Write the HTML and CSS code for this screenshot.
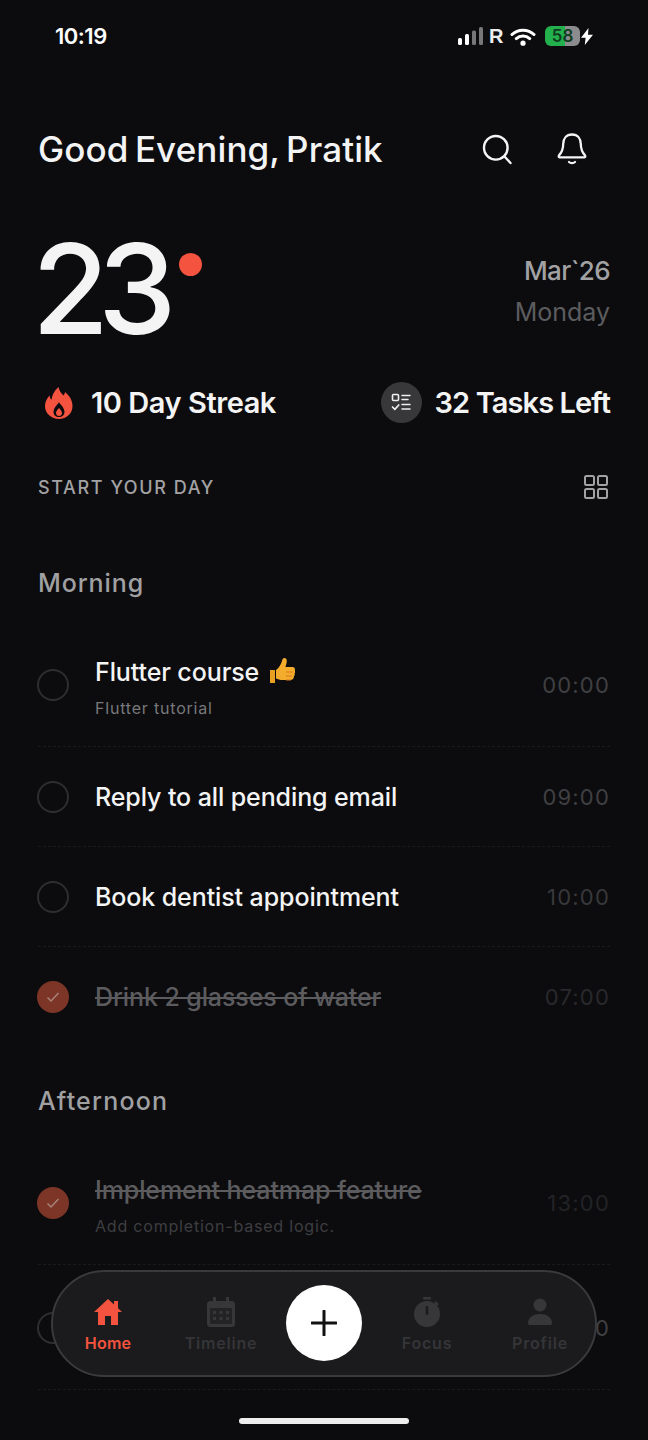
FILE: index.html
```html
<!DOCTYPE html>
<html lang="en">
<head>
<meta charset="utf-8">
<title>Home</title>
<link rel="stylesheet" href="styles.css">
</head>
<body>
<div class="screen">
  <div class="status">
    <span class="clock">10:19</span>
    <div class="status-icons">
      <svg class="signal" viewBox="0 0 27 18" width="27" height="18"><rect x="0" y="11" width="4" height="7" rx="1.500" fill="#fff"/><rect x="7" y="7" width="4" height="11" rx="1.500" fill="#fff"/><rect x="14" y="3.500" width="4" height="14.500" rx="1.500" fill="#77777a"/><rect x="21" y="0" width="4" height="18" rx="1.500" fill="#77777a"/></svg>
      <span class="roam">R</span>
      <svg class="wifi" viewBox="0 0 26 19" width="26" height="19"><path d="M2 7.500C8 1.700 18 1.700 24 7.500M6.300 11.600C10 8.200 16 8.200 19.700 11.600" fill="none" stroke="#fff" stroke-width="3" stroke-linecap="round"/><circle cx="13" cy="16.200" r="2.600" fill="#fff"/></svg>
      <span class="battery">58</span>
      <svg class="bolt" viewBox="0 0 12 17" width="12" height="17"><path d="M7.500 0 0 9.800h4.600L3.800 17 12 6.800H7z" fill="#fff"/></svg>
    </div>
  </div>

  <main class="content">
    <header class="top">
      <h1 class="greeting">Good Evening, Pratik</h1>
      <div class="top-actions">
        <svg viewBox="0 0 32 32" width="32" height="32"><circle cx="14.800" cy="14.800" r="11.800" fill="none" stroke="#f4f4f4" stroke-width="2.400"/><path d="m23.500 23.500 6 6.500" stroke="#f4f4f4" stroke-width="2.400" stroke-linecap="round"/></svg>
        <svg viewBox="0 0 32 34" width="32" height="34"><path d="M16 2.500c-5.500 0-8.800 4-8.800 9.500 0 6.500-2 9-4.200 11.400-.7.800-.2 1.900.9 1.900h24.200c1.100 0 1.600-1.100.9-1.900-2.200-2.400-4.200-4.900-4.200-11.400 0-5.500-3.300-9.500-8.800-9.500z" fill="none" stroke="#f4f4f4" stroke-width="2.300" stroke-linejoin="round"/><path d="M13 30c1.600 1.400 4.400 1.400 6 0" fill="none" stroke="#f4f4f4" stroke-width="2.300" stroke-linecap="round"/></svg>
      </div>
    </header>

    <section class="hero">
      <div class="day-wrap">
        <span class="day">23</span>
        <span class="day-dot"></span>
      </div>
      <div class="date">
        <span class="month">Mar`26</span>
        <span class="weekday">Monday</span>
      </div>
    </section>

    <section class="stats">
      <div class="stat">
        <svg class="flame" viewBox="0 0 30 32" width="30" height="32"><path fill-rule="evenodd" d="M14.500 0c1 4.500 3 6.500 5 8.500.8-1 1.300-2 1.500-3.500 4.500 3.500 7.500 8.500 7.500 14C28.500 26.500 22.500 32 15 32S1 26.500 1 19c0-4.500 2-7.500 4.500-10.500.3 2 .9 3.200 2 4.200C8 8 10.500 3.500 14.500 0zM15 15.500c-2.500 3-5.500 5.800-5.500 9.500 0 3 2.500 5 5.500 5s5.500-2 5.500-5c0-3.700-3-6.500-5.500-9.500z" fill="#f4533f"/><path d="M15 21c-1.500 1.800-3 3-3 5 0 1.700 1.400 3 3 3s3-1.300 3-3c0-2-1.500-3.200-3-5z" fill="#f4533f"/></svg>
        <span class="stat-text streak">10 Day Streak</span>
      </div>
      <div class="stat">
        <span class="stat-badge">
          <svg viewBox="0 0 20 20" width="20" height="20"><rect x="1.500" y="1.500" width="6" height="6" rx="1" fill="none" stroke="#eee" stroke-width="1.600"/><path d="M11 2.500h8M11 6.500h6M11 11.500h8M11 16h8" stroke="#eee" stroke-width="1.500" stroke-linecap="round"/><path d="m1.500 14 2.300 2.300 4-4.300" fill="none" stroke="#eee" stroke-width="1.700" stroke-linecap="round" stroke-linejoin="round"/></svg>
        </span>
        <span class="stat-text">32 Tasks Left</span>
      </div>
    </section>

    <div class="start">
      <span class="start-label">START YOUR DAY</span>
      <svg viewBox="0 0 24 24" width="24" height="24"><g fill="none" stroke="#a2a2a4" stroke-width="2"><rect x="1" y="1" width="9" height="9" rx="1.500"/><rect x="14" y="1" width="9" height="9" rx="1.500"/><rect x="1" y="14" width="9" height="9" rx="1.500"/><rect x="14" y="14" width="9" height="9" rx="1.500"/></g></svg>
    </div>

    <h2 class="section-title section-first">Morning</h2>
    <ul class="tasks">
      <li class="task task-two">
        <span class="check"></span>
        <div class="task-body">
          <div class="task-title">Flutter course
            <svg class="thumb" viewBox="0 0 26 28" width="26" height="28"><path d="M1 13h5v13H1z" fill="#e8a020"/><path d="M7 13c3-2 5-6 6-9 .4-2 1-3 2.500-3 2 0 2.500 2 2.200 4-.2 2-1 3.500-1.200 5h7c2 0 2.800 1.500 2.300 3 .7 1 .6 2.500-.3 3.300.5 1 .3 2.400-.7 3.100.3 1.300-.3 2.900-2 3.300-1 .3-6 .3-9 .3-3 0-5-.7-6.800-1.500z" fill="#f4ac2c"/><path d="M17 15h7M17 19h6M17 23h5" stroke="#d9781f" stroke-width="1"/></svg>
          </div>
          <div class="task-sub">Flutter tutorial</div>
        </div>
        <span class="task-time">00:00</span>
      </li>
      <li class="task">
        <span class="check"></span>
        <div class="task-body"><div class="task-title">Reply to all pending email</div></div>
        <span class="task-time">09:00</span>
      </li>
      <li class="task">
        <span class="check"></span>
        <div class="task-body"><div class="task-title">Book dentist appointment</div></div>
        <span class="task-time time-dim">10:00</span>
      </li>
      <li class="task task-last">
        <span class="check check-done"><svg viewBox="0 0 18 18" width="18" height="18"><path d="m3.500 9.500 3.500 3.500 7.500-8" fill="none" stroke="#a8837a" stroke-width="1.500"/></svg></span>
        <div class="task-body"><div class="task-title title-done">Drink 2 glasses of water</div></div>
        <span class="task-time time-done">07:00</span>
      </li>
    </ul>

    <h2 class="section-title section-wide">Afternoon</h2>
    <ul class="tasks">
      <li class="task task-two">
        <span class="check check-done"><svg viewBox="0 0 18 18" width="18" height="18"><path d="m3.500 9.500 3.500 3.500 7.500-8" fill="none" stroke="#a8837a" stroke-width="1.500"/></svg></span>
        <div class="task-body">
          <div class="task-title title-done">Implement heatmap feature</div>
          <div class="task-sub sub-done">Add completion-based logic.</div>
        </div>
        <span class="task-time time-faint">13:00</span>
      </li>
      <li class="task task-two task-hidden">
        <span class="check"></span>
        <div class="task-body"></div>
        <span class="task-time">0</span>
      </li>
    </ul>
  </main>

  <nav class="nav">
    <a class="nav-item nav-active">
      <svg viewBox="0 0 30 28" width="30" height="28"><path d="M15 1 1 14h4v13h7v-9h6v9h7V14h4l-4-3.700V3h-4v3.600z" fill="#f4533f"/></svg>
      <span>Home</span>
    </a>
    <a class="nav-item">
      <svg viewBox="0 0 28 30" width="28" height="30"><path d="M6 0h3v4h10V0h3v4h2.500A3.500 3.500 0 0 1 28 7.500V26.500a3.500 3.500 0 0 1-3.500 3.500h-21A3.500 3.500 0 0 1 0 26.500V7.500A3.500 3.500 0 0 1 3.500 4H6z" fill="#37373a"/><rect x="3" y="11" width="22" height="16" rx="1" fill="#232325"/><g fill="#37373a"><rect x="6" y="14" width="3" height="3"/><rect x="12.500" y="14" width="3" height="3"/><rect x="19" y="14" width="3" height="3"/><rect x="6" y="20" width="3" height="3"/><rect x="12.500" y="20" width="3" height="3"/><rect x="19" y="20" width="3" height="3"/></g></svg>
      <span>Timeline</span>
    </a>
    <button class="nav-add" aria-label="Add">
      <svg viewBox="0 0 26 26" width="26" height="26"><path d="M13 1v24M1 13h24" stroke="#111" stroke-width="3" stroke-linecap="round"/></svg>
    </button>
    <a class="nav-item">
      <svg viewBox="0 0 28 30" width="28" height="30"><rect x="10" y="0" width="8" height="2.500" rx="1" fill="#37373a"/><circle cx="14" cy="17" r="13" fill="#37373a"/><path d="M22 5l3 3" stroke="#37373a" stroke-width="2.500"/><rect x="12.700" y="9" width="2.600" height="9" rx="1.300" fill="#1c1c1e"/></svg>
      <span>Focus</span>
    </a>
    <a class="nav-item">
      <svg viewBox="0 0 26 28" width="26" height="28"><circle cx="13" cy="7" r="6.500" fill="#37373a"/><path d="M1 25c0-6 6-9 12-9s12 3 12 9c0 1.500-1 2-2 2H3c-1 0-2-.5-2-2z" fill="#37373a"/></svg>
      <span>Profile</span>
    </a>
  </nav>
  <div class="home-bar"></div>
</div>
</body>
</html>
```
FILE: styles.css
```css
* { box-sizing: border-box; }
html, body { margin: 0; padding: 0; background: #0c0c0f; }
body { font-family: Inter, "Liberation Sans", sans-serif; color: #f4f4f4; }
h1, h2, ul { margin: 0; padding: 0; }
ul { list-style: none; }

.screen { position: relative; width: 648px; height: 1440px; overflow: hidden; background: #0c0c0f; }

.status { height: 72px; padding: 0 55px; display: flex; justify-content: space-between; align-items: center; }
.clock { font-size: 22px; font-weight: 600; letter-spacing: -0.5px; color: #fff; }
.status-icons { display: flex; align-items: center; }
.signal { margin-right: 4px; }
.roam { font-size: 20px; font-weight: 700; color: #eee; width: 21px; font-family: "Liberation Sans", sans-serif; }
.wifi { margin-right: 9px; }
.battery { width: 35px; height: 20px; border-radius: 6px; background: linear-gradient(90deg, #22b14c 0 56%, #8c8c8e 56% 100%); color: #0f3d1f; font-size: 17px; font-weight: 600; line-height: 20px; text-align: center; }
.bolt { margin-left: 1px; }

.content { padding: 0 38px; }

.top { margin-top: 47px; height: 60px; display: flex; justify-content: space-between; align-items: center; }
.greeting { font-size: 35px; font-weight: 500; letter-spacing: 0.1px; word-spacing: -3px; color: #f4f4f4; }
.top-actions { display: flex; align-items: center; gap: 43px; margin-right: 22px; }

.hero { margin-top: 50px; height: 140px; display: flex; justify-content: space-between; align-items: flex-start; }
.day-wrap { display: flex; align-items: flex-start; margin-left: -6px; padding-top: 6px; }
.day { font-size: 125px; line-height: 108px; font-weight: 500; letter-spacing: -11px; color: #f4f4f4; }
.day-dot { width: 23px; height: 23px; border-radius: 50%; background: #f4533f; margin: 18px 0 0 14px; }
.date { display: flex; flex-direction: column; align-items: flex-end; padding-top: 24px; }
.month { font-size: 26px; line-height: 36px; font-weight: 500; letter-spacing: -0.6px; color: #a2a2a4; }
.weekday { font-size: 25px; line-height: 36px; margin-top: 5px; color: #5c5c5f; }

.stats { margin-top: 13px; height: 41px; display: flex; justify-content: space-between; align-items: center; }
.stat { display: flex; align-items: center; }
.flame { margin: 0 17px 0 6px; }
.stat-badge { width: 41px; height: 41px; border-radius: 50%; background: #38383b; display: flex; align-items: center; justify-content: center; margin-right: 13px; }
.stat-text { font-size: 29px; font-weight: 600; letter-spacing: -0.9px; color: #f4f4f4; }
.streak { letter-spacing: -0.45px; }

.start { margin-top: 52px; height: 24px; display: flex; justify-content: space-between; align-items: center; margin-right: 2px; }
.start-label { font-size: 18px; font-weight: 500; letter-spacing: 1.6px; color: #a2a2a4; }

.section-title { height: 40px; line-height: 40px; font-size: 25px; font-weight: 500; letter-spacing: 0.9px; color: #a0a0a2; margin-top: 34px; margin-bottom: 19px; }
.section-first { margin-top: 64px; }
.section-wide { letter-spacing: 1.2px; }

.task { display: flex; align-items: center; padding: 25px 0 24px; border-bottom: 1px dashed #1a1a1d; }
.task-two { padding-bottom: 23px; }
.task-two .task-body { margin-bottom: 4px; }
.task-last { border-bottom: 0; padding-bottom: 25px; }
.task-hidden { min-height: 125px; }
.check { flex: none; width: 32px; height: 32px; margin-left: -1px; margin-right: 26px; border-radius: 50%; border: 2px solid #2e2e31; display: flex; align-items: center; justify-content: center; }
.check-done { background: #7c3527; border-color: #7c3527; }
.task-body { flex: 1; }
.task-title { display: flex; align-items: center; gap: 10px; height: 50px; font-size: 25px; font-weight: 500; letter-spacing: -0.1px; color: #f4f4f4; }
.thumb { margin-top: -2px; }
.title-done { color: #5c5c5f; text-decoration: line-through; }
.task-sub { height: 22px; line-height: 22px; font-size: 16px; letter-spacing: 0.8px; color: #78787b; }
.sub-done { color: #3e3e41; }
.task-time { font-size: 22px; letter-spacing: 1.200px; color: #404043; }
.time-dim { color: #38383b; }
.time-done { color: #29292c; }
.time-faint { color: #232326; }

.nav { position: absolute; left: 51px; top: 1270px; width: 546px; height: 107px; border-radius: 54px; background: #1b1b1d; border: 2px solid #3a3a3d; }
.nav-item { position: absolute; top: 25px; width: 100px; display: flex; flex-direction: column; align-items: center; gap: 6px; font-size: 16px; font-weight: 600; letter-spacing: 0.8px; color: #353538; }
.nav-item:nth-child(1) { left: 5px; }
.nav-item:nth-child(2) { left: 118px; }
.nav-item:nth-child(4) { left: 324px; }
.nav-item:nth-child(5) { left: 437px; }
.nav-item svg { height: 30px; }
.nav-active { color: #f4533f; letter-spacing: 0.2px; }
.nav-add { position: absolute; left: 233px; top: 13px; width: 76px; height: 76px; border: 0; padding: 0; border-radius: 50%; background: #fff; display: flex; align-items: center; justify-content: center; }

.home-bar { position: absolute; left: 239px; top: 1418px; width: 170px; height: 6px; border-radius: 3px; background: #eee; }
```
